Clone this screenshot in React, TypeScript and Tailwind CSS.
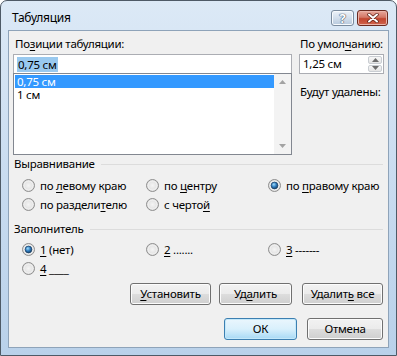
import React from "react";

const F = "font-['Noto_Sans',sans-serif]";

function Radio({ checked }: { checked?: boolean }) {
  return (
    <svg width="13" height="13" viewBox="0 0 13 13" className="shrink-0">
      <defs>
        <radialGradient id="rgU" cx="50%" cy="50%" r="55%">
          <stop offset="0%" stopColor="#f4f4f4" />
          <stop offset="70%" stopColor="#e2e2e2" />
          <stop offset="100%" stopColor="#cfcfcf" />
        </radialGradient>
        <radialGradient id="rgC" cx="40%" cy="35%" r="65%">
          <stop offset="0%" stopColor="#9fdcfa" />
          <stop offset="55%" stopColor="#2f7cc0" />
          <stop offset="100%" stopColor="#17466f" />
        </radialGradient>
      </defs>
      <circle cx="6.5" cy="6.5" r="6" fill="url(#rgU)" stroke="#8f8f8f" />
      <circle cx="6.5" cy="6.5" r="4.5" fill="none" stroke="#ffffff" strokeOpacity="0.6" strokeWidth="0.8" />
      {checked && <circle cx="6.5" cy="6.5" r="3.4" fill="url(#rgC)" stroke="#1a3c62" strokeWidth="0.7" />}
    </svg>
  );
}

function U({ children }: { children: React.ReactNode }) {
  return <span className="underline underline-offset-2">{children}</span>;
}

function RadioItem({ checked, children }: { checked?: boolean; children: React.ReactNode }) {
  return (
    <div className="flex items-center gap-[5px] h-[19px] whitespace-nowrap">
      <Radio checked={checked} />
      <span>{children}</span>
    </div>
  );
}

function Btn({ w, def, children }: { w: string; def?: boolean; children: React.ReactNode }) {
  return (
    <div
      className={`${w} h-[22px] rounded-[3px] border flex items-center justify-center ${
        def
          ? "border-[#3c7fb1] bg-gradient-to-b from-[#eaf6fd] via-[#d9f0fc] to-[#a7d9f5] shadow-[inset_0_0_0_1px_#c4e8fa]"
          : "border-[#707070] bg-[linear-gradient(to_bottom,#f2f2f2_0%,#ebebeb_50%,#dddddd_51%,#cfcfcf_100%)] shadow-[inset_0_0_0_1px_#fcfcfc]"
      }`}
    >
      {children}
    </div>
  );
}

function GroupLabel({ children }: { children: React.ReactNode }) {
  return (
    <div className="flex items-center h-[16px] pl-[5px] pr-[5px]">
      <span className="whitespace-nowrap">{children}</span>
      <div className="flex-1 ml-[6px] border-t border-[#dcdcdc]" />
    </div>
  );
}

export default function App() {
  return (
    <div className={`w-[397px] h-[356px] bg-white text-[11.5px] tracking-[-0.25px] text-black ${F}`}>
      <div className="w-[397px] h-[356px] rounded-t-[7px] border border-[#4e5a66] bg-gradient-to-b from-[#dce9f6] via-[#c9dcf0] to-[#b9d1ea] flex flex-col">
        {/* title bar */}
        <div className="h-[29px] flex items-start relative">
          <div className="pl-[11px] pt-[8px] text-[12px] leading-[18px]">Табуляция</div>
          <div className="ml-auto mr-[8px] mt-[9px] flex gap-[3px]">
            <div className="w-[23px] h-[16px] rounded-[3px] border border-[#7a8b9e] bg-gradient-to-b from-[#eef3f9] via-[#d3dfec] to-[#b7c9dd] flex items-center justify-center shadow-[inset_0_0_0_1px_#f7fafd]">
              <span className="text-[13px] font-bold leading-none text-white [text-shadow:0_0_1px_#44546a,0_0_1px_#44546a,0_0_1px_#44546a]">?</span>
            </div>
            <div className="w-[31px] h-[16px] rounded-[3px] border border-[#6b2a20] bg-[linear-gradient(to_bottom,#e8a89c_0%,#d47766_45%,#c2452f_55%,#d0644d_100%)] flex items-center justify-center shadow-[inset_0_0_0_1px_#eab3a8]">
              <svg width="12" height="10" viewBox="0 0 12 10">
                <path d="M2 1.5 L10 8.5 M10 1.5 L2 8.5" stroke="#5a1c12" strokeWidth="3.4" strokeLinecap="round" />
                <path d="M2 1.5 L10 8.5 M10 1.5 L2 8.5" stroke="#ffffff" strokeWidth="2" strokeLinecap="round" />
              </svg>
            </div>
          </div>
        </div>

        {/* client area */}
        <div className="mx-[7px] h-[318px] border border-[#8ea3b9] bg-[#f0f0f0] flex flex-col">
          {/* top section */}
          <div className="flex pt-[5px] pl-[4px]">
            <div className="w-[279px] flex flex-col">
              <div className="h-[16px] leading-[16px] pl-[2px]">
                По<U>з</U>иции табуляции:
              </div>
              <div className="mt-[2px] h-[20px] border border-[#abadb3] bg-white flex items-center pl-[3px]">
                <span className="bg-[#99c9ef] leading-[15px] px-px">0,75 см</span>
              </div>
              <div className="-mt-px h-[82px] border border-[#828790] bg-white flex">
                <div className="flex-1 pt-px pl-px">
                  <div className="h-[13px] leading-[13px] bg-[#3399ff] text-white pl-[2px] overflow-hidden">0,75 см</div>
                  <div className="h-[13px] leading-[13px] pl-[2px] overflow-hidden">1 см</div>
                </div>
                <div className="w-[17px] bg-[#f3f3f3] flex flex-col justify-between items-center py-[6px]">
                  <svg width="7" height="4" viewBox="0 0 7 4">
                    <path d="M0 4 L3.5 0 L7 4 Z" fill="#a3a3a3" />
                  </svg>
                  <svg width="7" height="4" viewBox="0 0 7 4">
                    <path d="M0 0 L3.5 4 L7 0 Z" fill="#a3a3a3" />
                  </svg>
                </div>
              </div>
            </div>
            <div className="ml-[7px] w-[85px] flex flex-col">
              <div className="h-[16px] leading-[16px] pl-px whitespace-nowrap">
                По умол<U>ч</U>анию:
              </div>
              <div className="mt-[2px] h-[20px] border border-[#abadb3] bg-white flex items-center">
                <span className="pl-[3px] flex-1">1,25 см</span>
                <div className="w-[16px] h-full flex flex-col gap-px p-px">
                  <div className="flex-1 rounded-[2px] border border-[#c9cdd2] bg-gradient-to-b from-[#f7f7f7] to-[#e4e4e4] flex items-center justify-center">
                    <svg width="7" height="4" viewBox="0 0 7 4">
                      <path d="M0 4 L3.5 0 L7 4 Z" fill="#6d6d6d" />
                    </svg>
                  </div>
                  <div className="flex-1 rounded-[2px] border border-[#c9cdd2] bg-gradient-to-b from-[#f7f7f7] to-[#e4e4e4] flex items-center justify-center">
                    <svg width="7" height="4" viewBox="0 0 7 4">
                      <path d="M0 0 L3.5 4 L7 0 Z" fill="#6d6d6d" />
                    </svg>
                  </div>
                </div>
              </div>
              <div className="mt-[10px] h-[16px] leading-[16px] pl-px whitespace-nowrap">Будут удалены:</div>
            </div>
          </div>

          {/* alignment */}
          <div className="mt-[1px]">
            <GroupLabel>Выравнивание</GroupLabel>
          </div>
          <div className="mt-[4px] pl-[13px] grid grid-cols-[124px_122px_1fr]">
            <RadioItem>
              по <U>л</U>евому краю
            </RadioItem>
            <RadioItem>
              по <U>ц</U>ентру
            </RadioItem>
            <RadioItem checked>
              по <U>п</U>равому краю
            </RadioItem>
            <RadioItem>
              по раздели<U>т</U>елю
            </RadioItem>
            <RadioItem>
              с черто<U>й</U>
            </RadioItem>
          </div>

          {/* leader */}
          <div className="mt-[7px]">
            <GroupLabel>Заполнитель</GroupLabel>
          </div>
          <div className="mt-[3px] pl-[13px] grid grid-cols-[124px_122px_1fr]">
            <RadioItem checked>
              <U>1</U> (нет)
            </RadioItem>
            <RadioItem>
              <U>2</U> .......
            </RadioItem>
            <RadioItem>
              <U>3</U> -------
            </RadioItem>
            <RadioItem>
              <U>4</U> ____
            </RadioItem>
          </div>

          {/* buttons */}
          <div className="mt-[5px] flex justify-end pr-[5px] gap-[8px]">
            <Btn w="w-[81px]">
              <span>
                <U>У</U>становить
              </span>
            </Btn>
            <div className="flex gap-[10px]">
              <Btn w="w-[73px]">
                <span>
                  Уд<U>а</U>лить
                </span>
              </Btn>
              <Btn w="w-[81px]">
                <span>
                  Удалит<U>ь</U> все
                </span>
              </Btn>
            </div>
          </div>
          <div className="mt-[13px] flex justify-end pr-[5px] gap-[10px]">
            <Btn w="w-[73px]" def>
              <span>ОК</span>
            </Btn>
            <Btn w="w-[76px]">
              <span>Отмена</span>
            </Btn>
          </div>
        </div>
      </div>
    </div>
  );
}
